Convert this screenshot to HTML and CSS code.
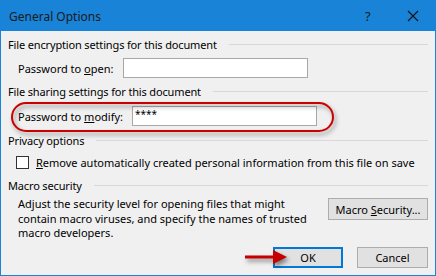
FILE: index.html
```html
<!DOCTYPE html>
<html>
<head>
<meta charset="utf-8">
<link rel="stylesheet" href="styles.css">
</head>
<body>
<div class="window">
  <div class="titlebar">
    <span class="title">General Options</span>
    <span class="help">?</span>
    <svg class="close" width="12" height="12" viewBox="0 0 12 12"><path d="M1 1L11 11M11 1L1 11" stroke="#111" stroke-width="1.1" fill="none"/></svg>
  </div>
  <div class="content">
    <div class="group-header"><span>File encryption settings for this document</span><i class="rule"></i></div>
    <div class="row row-open">
      <span class="label label-open">Password to <u>o</u>pen:</span>
      <span class="field"></span>
    </div>
    <div class="group-header gh2"><span>File sharing settings for this document</span><i class="rule"></i></div>
    <div class="row row-modify">
      <span class="label label-modify">Password to <u>m</u>odify:</span>
      <span class="field field-pw">****</span>
    </div>
    <div class="group-header gh3"><span>Privacy options</span><i class="rule"></i></div>
    <div class="check-row">
      <span class="checkbox"></span>
      <span><u>R</u>emove automatically created personal information from this file on save</span>
    </div>
    <div class="group-header gh4"><span>Macro security</span><i class="rule"></i></div>
    <div class="macro">
      <p class="macro-text">Adjust the security level for opening files that might<br>contain macro viruses, and specify the names of trusted<br>macro developers.</p>
      <button class="btn btn-macro">Macro <u>S</u>ecurity...</button>
    </div>
    <div class="buttons">
      <button class="btn btn-ok">OK</button>
      <button class="btn btn-cancel">Cancel</button>
    </div>
  </div>
  <div class="ellipse"></div>
  <svg class="arrow" width="50" height="24" viewBox="0 0 50 24">
    <path d="M2 10.5H30V5L44 12L30 19V13.5H2Z" fill="#c40000"/>
  </svg>
</div>
</body>
</html>
```
FILE: styles.css
```css
* { box-sizing: border-box; }
html, body { margin: 0; padding: 0; }
body {
  width: 436px;
  height: 276px;
  background: #f0f0f0;
  font-family: "Noto Sans", "Open Sans", sans-serif;
  font-size: 11px;
  color: #000;
  overflow: hidden;
}
u { text-decoration: underline; text-underline-offset: 1px; }
.window {
  position: relative;
  width: 436px;
  height: 276px;
  border: 1px solid #1883d7;
  background: #f0f0f0;
}
.titlebar {
  height: 30px;
  background: #1883d7;
  display: flex;
  align-items: center;
  padding-left: 8px;
  color: #1a1a1a;
  font-size: 12px;
}
.title { flex: 1; }
.help { width: 12px; margin-right: 30px; font-size: 13px; }
.close { margin-right: 16px; }
.content {
  padding: 6px 7px 0 7px;
}
.group-header {
  height: 16px;
  line-height: 16px;
  display: flex;
  align-items: center;
  white-space: nowrap;
  letter-spacing: -0.15px;
}
.rule {
  flex: 1;
  height: 1px;
  background: #d8d8d8;
  margin-left: 12px;
  margin-top: -1px;
}
.gh2 { margin-top: 6px; }
.gh3 { margin-top: 7px; }
.gh4 { margin-top: 8px; }
.row {
  display: flex;
  align-items: center;
  padding-left: 10px;
  margin-top: 5px;
  height: 20px;
}
.row-modify { margin-top: 6px; }
.label { white-space: nowrap; }
.label-open { width: 105px; }
.label-modify { width: 114px; }
.field {
  width: 185px;
  height: 20px;
  background: #fff;
  border: 1px solid #a8a8a8;
  padding-left: 2px;
  line-height: 18px;
}
.field-pw {
  font-size: 10px;
  line-height: 14px;
}
.check-row {
  display: flex;
  align-items: center;
  margin-top: 5px;
  padding-left: 8px;
  height: 16px;
  white-space: nowrap;
}
.checkbox {
  width: 13px;
  height: 13px;
  border: 1px solid #333;
  background: #fff;
  margin-right: 7px;
}
.macro {
  display: flex;
  align-items: flex-start;
  margin-top: 3px;
}
.macro-text {
  flex: 1;
  margin: 0;
  padding-left: 10px;
  line-height: 14.5px;
}
.btn {
  font-family: inherit;
  font-size: 11px;
  color: #000;
  background: #e1e1e1;
  border: 1px solid #adadad;
  padding: 0;
  margin: 0;
}
.btn-macro {
  width: 100px;
  height: 22px;
  margin-top: 1px;
}
.buttons {
  display: flex;
  justify-content: flex-end;
  gap: 14px;
  margin-top: 6px;
}
.btn-ok {
  width: 70px;
  height: 21px;
  border: 2px solid #0078d7;
}
.btn-cancel {
  width: 71px;
  height: 21px;
}
.ellipse {
  position: absolute;
  left: 10px;
  top: 101px;
  width: 323px;
  height: 30px;
  border: 2px solid #cc0000;
  border-radius: 16px;
  filter: drop-shadow(2px 3px 2px rgba(0,0,0,0.4));
}
.arrow {
  position: absolute;
  left: 242px;
  top: 244px;
  filter: drop-shadow(2px 3px 2px rgba(0,0,0,0.45));
}
```
